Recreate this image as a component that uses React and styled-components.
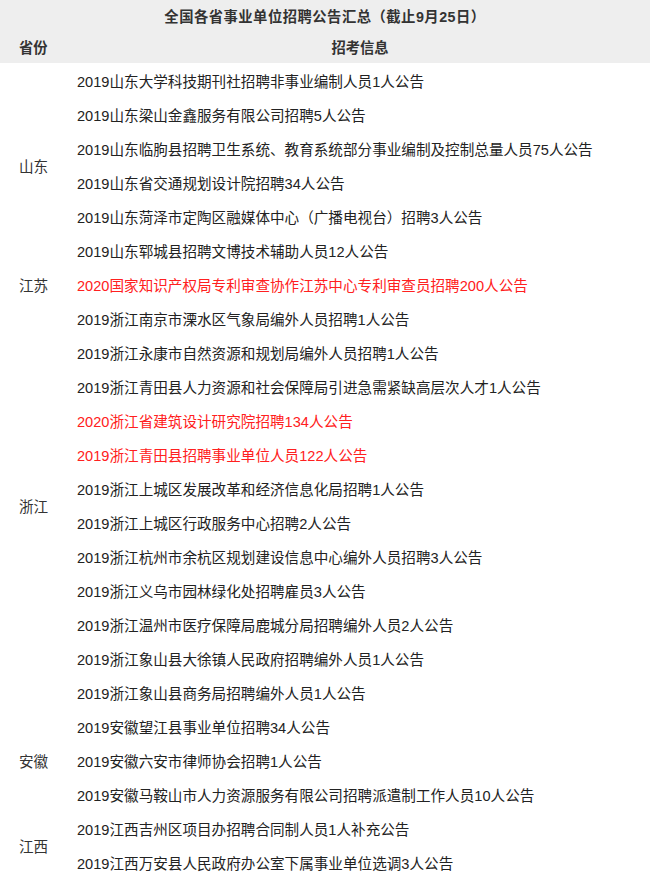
import React from "react";
import styled, { createGlobalStyle } from "styled-components";

const GlobalStyle = createGlobalStyle`
  body {
    margin: 0;
    background: #ffffff;
    font-family: "Liberation Sans", "Noto Sans CJK SC", sans-serif;
    color: #333333;
  }
`;

const Table = styled.div`
  width: 650px;
  display: grid;
  grid-template-columns: 66px 1fr;
  font-size: 14.6px;
`;

const Title = styled.div`
  grid-column: 1 / 3;
  height: 30px;
  display: flex;
  align-items: center;
  justify-content: center;
  background-color: #eeeeee;
  font-weight: bold;
  font-size: 14.3px;
  letter-spacing: 0.5px;
  color: #333333;
`;

const HeadCell = styled.div`
  height: 33px;
  display: flex;
  align-items: center;
  justify-content: ${(props) => (props.center ? "center" : "flex-start")};
  padding-left: ${(props) => (props.center ? "4px" : "19px")};
  background-color: #eeeeee;
  font-weight: bold;
  font-size: 14.3px;
  color: #333333;
`;

const Province = styled.div`
  grid-row: span ${(props) => props.span};
  display: flex;
  align-items: center;
  padding-left: 19px;
  color: #333333;
`;

const Item = styled.div`
  grid-column: 2;
  height: 34px;
  display: flex;
  align-items: center;
  padding-left: 11px;
  white-space: nowrap;
  color: ${(props) => (props.$hot ? "#ff2020" : "#222222")};
`;

const groups = [
  {
    name: "山东",
    items: [
      ["2019山东大学科技期刊社招聘非事业编制人员1人公告"],
      ["2019山东梁山金鑫服务有限公司招聘5人公告"],
      ["2019山东临朐县招聘卫生系统、教育系统部分事业编制及控制总量人员75人公告"],
      ["2019山东省交通规划设计院招聘34人公告"],
      ["2019山东菏泽市定陶区融媒体中心（广播电视台）招聘3人公告"],
      ["2019山东郓城县招聘文博技术辅助人员12人公告"],
    ],
  },
  {
    name: "江苏",
    items: [["2020国家知识产权局专利审查协作江苏中心专利审查员招聘200人公告", true]],
  },
  {
    name: "浙江",
    items: [
      ["2019浙江南京市溧水区气象局编外人员招聘1人公告"],
      ["2019浙江永康市自然资源和规划局编外人员招聘1人公告"],
      ["2019浙江青田县人力资源和社会保障局引进急需紧缺高层次人才1人公告"],
      ["2020浙江省建筑设计研究院招聘134人公告", true],
      ["2019浙江青田县招聘事业单位人员122人公告", true],
      ["2019浙江上城区发展改革和经济信息化局招聘1人公告"],
      ["2019浙江上城区行政服务中心招聘2人公告"],
      ["2019浙江杭州市余杭区规划建设信息中心编外人员招聘3人公告"],
      ["2019浙江义乌市园林绿化处招聘雇员3人公告"],
      ["2019浙江温州市医疗保障局鹿城分局招聘编外人员2人公告"],
      ["2019浙江象山县大徐镇人民政府招聘编外人员1人公告"],
      ["2019浙江象山县商务局招聘编外人员1人公告"],
    ],
  },
  {
    name: "安徽",
    items: [
      ["2019安徽望江县事业单位招聘34人公告"],
      ["2019安徽六安市律师协会招聘1人公告"],
      ["2019安徽马鞍山市人力资源服务有限公司招聘派遣制工作人员10人公告"],
    ],
  },
  {
    name: "江西",
    items: [
      ["2019江西吉州区项目办招聘合同制人员1人补充公告"],
      ["2019江西万安县人民政府办公室下属事业单位选调3人公告"],
    ],
  },
];

const App = () => {
  return (
    <>
      <GlobalStyle />
      <Table>
        <Title>全国各省事业单位招聘公告汇总（截止9月25日）</Title>
        <HeadCell>省份</HeadCell>
        <HeadCell center>招考信息</HeadCell>
        {groups.map((group) => (
          <React.Fragment key={group.name}>
            <Province span={group.items.length}>{group.name}</Province>
            {group.items.map(([text, hot]) => (
              <Item key={text} $hot={hot}>
                {text}
              </Item>
            ))}
          </React.Fragment>
        ))}
      </Table>
    </>
  );
};

export default App;
